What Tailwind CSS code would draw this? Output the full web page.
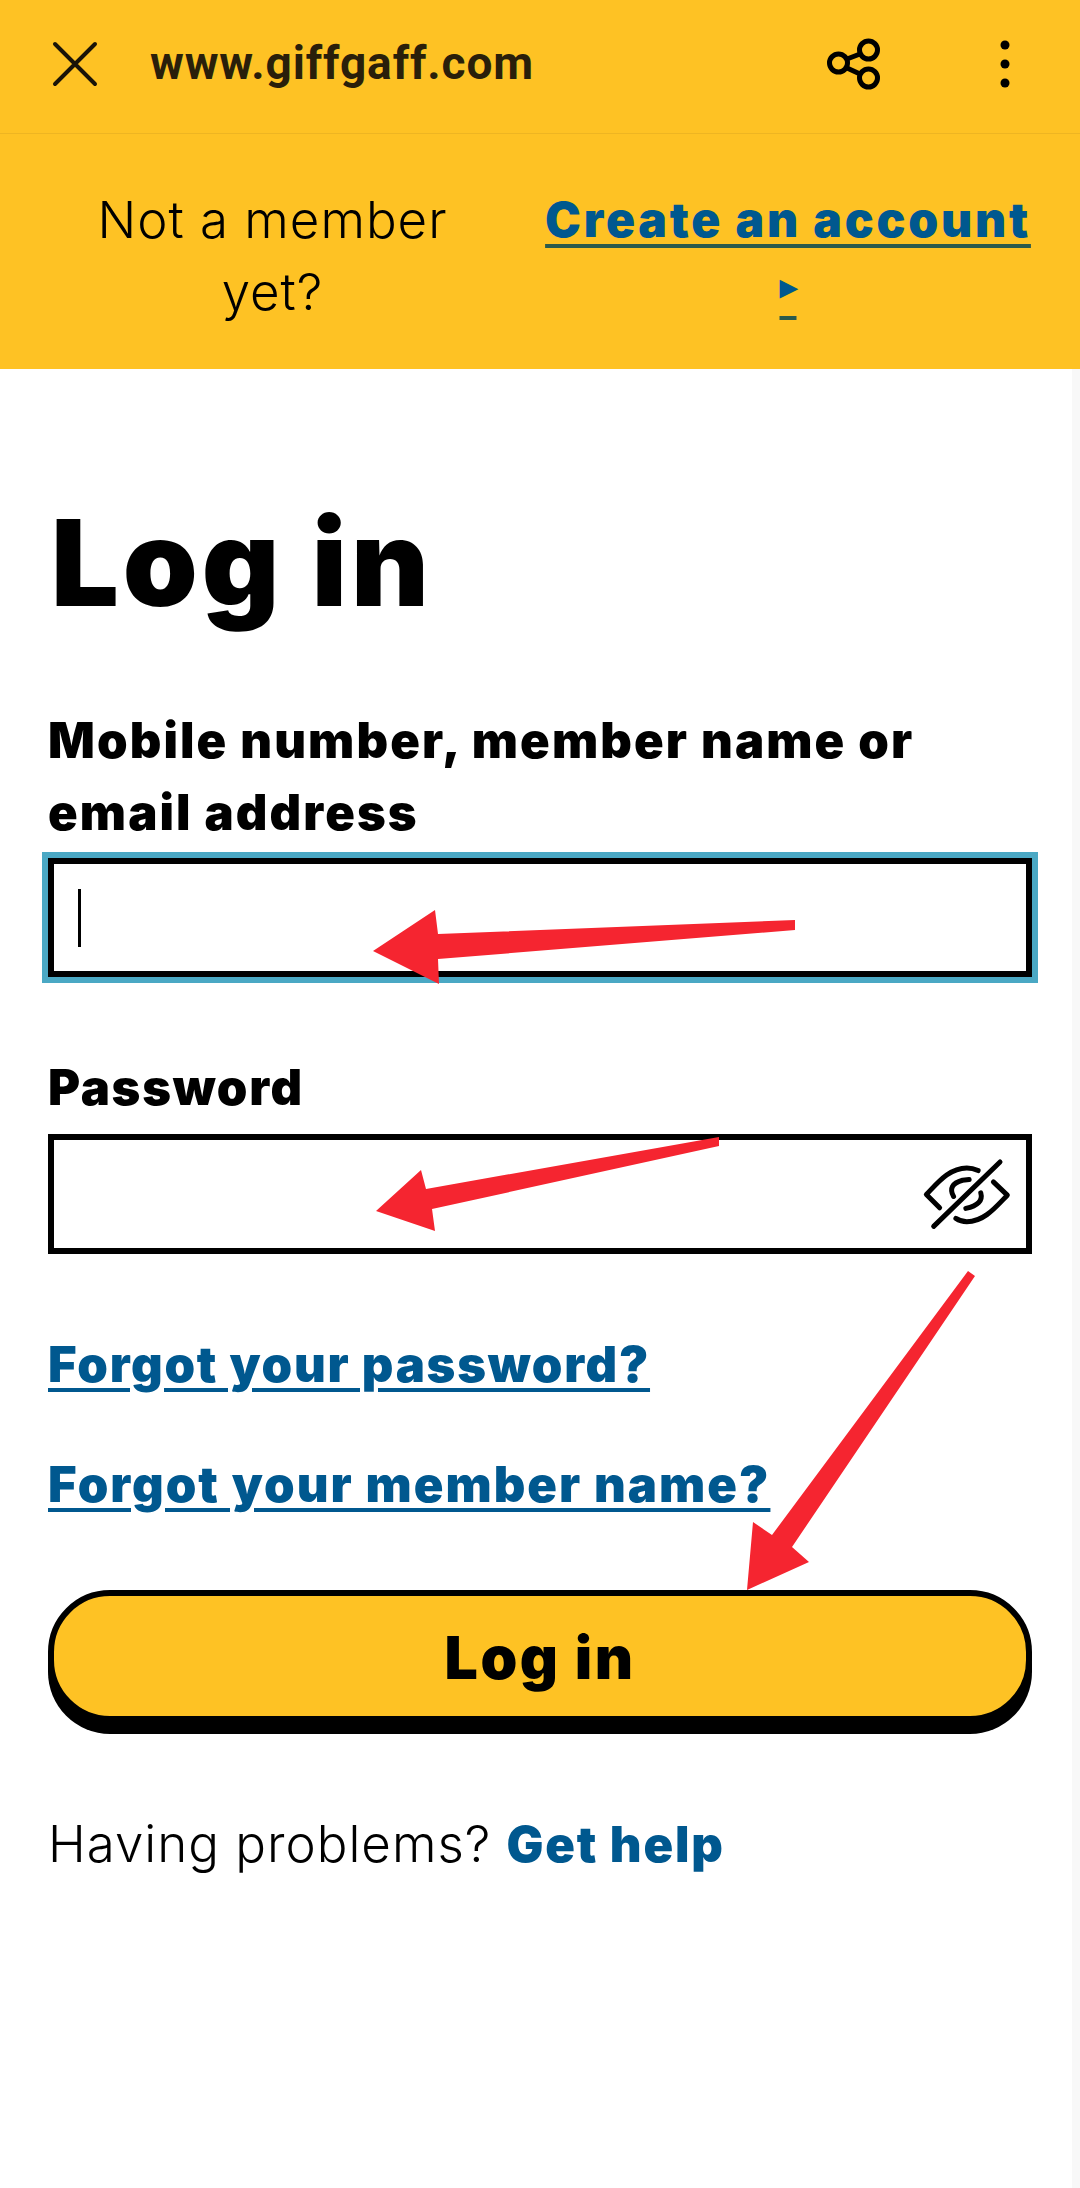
<!doctype html>
<html lang="en">
<head>
    <meta charset="utf-8">
    <title>Log in</title>
    <script src="https://cdn.jsdelivr.net/npm/@tailwindcss/browser@4"></script>
</head>
<body class="bg-white">
<div class="relative w-[1080px] h-[2188px] overflow-hidden font-['Inter',sans-serif] text-black">
    <!-- browser bar -->
    <div class="flex items-center h-[134px] pb-[6px] bg-[#fec224] border-b border-[#eeb522]">
        <svg class="ml-[52px] w-[46px] h-[46px]" viewBox="0 0 46 46" fill="none" stroke="#1a1408" stroke-width="4" stroke-linecap="round"><path d="M3 3 L43 43 M43 3 L3 43"/></svg>
        <span class="ml-[52px] font-['Roboto',sans-serif] font-bold text-[46px] tracking-[0.9px] text-[#2a1f0a]">www.giffgaff.com</span>
        <svg class="ml-auto w-[54px] h-[54px]" viewBox="0 0 54 54" fill="none" stroke="#000" stroke-width="5"><circle cx="11.5" cy="26" r="9"/><circle cx="41.5" cy="13" r="9"/><circle cx="41.5" cy="41" r="9"/><path d="M20 22 L33 17 M20 31 L33 37"/></svg>
        <svg class="ml-[118px] mr-[69px] w-[12px] h-[56px]" viewBox="0 0 12 56" fill="#000"><circle cx="6" cy="9" r="4.5"/><circle cx="6" cy="28" r="4.5"/><circle cx="6" cy="47" r="4.5"/></svg>
    </div>

    <!-- banner -->
    <div class="flex h-[235px] bg-[#fec224] pt-[50px]">
        <p class="w-[545px] text-center font-light text-[51px] tracking-[1px] leading-[72px]">Not a member<br>yet?</p>
        <a class="w-[486px] text-center font-black text-[48px] tracking-[2.8px] leading-[72px] text-[#00588f]">
            <span class="underline decoration-[#2b5a4c] decoration-[4px] underline-offset-[7px]">Create an account</span><br>
            <span class="inline-block -translate-y-[11px] text-[34px] tracking-normal underline decoration-[#2b5a4c] decoration-[4px] underline-offset-[18px]">▸</span>
        </a>
    </div>

    <!-- form -->
    <div class="px-[48px]">
        <h1 class="mt-[124px] pl-[3px] font-black text-[120px] tracking-[4px] leading-[140px]">Log in</h1>
        <label class="block mt-[72px] font-black text-[49px] tracking-[2.1px] leading-[72px]">Mobile number, member name or<br>email address</label>
        <div class="mt-[9px] h-[119px] border-[6px] border-black outline-[6px] outline-[#4aa8c4] flex items-center pl-[24px]">
            <div class="w-[3px] h-[58px] bg-black"></div>
        </div>
        <label class="block mt-[75px] font-black text-[49px] tracking-[1.7px] leading-[72px]">Password</label>
        <div class="mt-[10px] h-[120px] border-[6px] border-black flex items-center justify-end pr-[12px]">
            <svg class="w-[93px] h-[73px]" viewBox="120 110 280 220" fill="none" stroke="#000" stroke-width="15" stroke-linecap="round" stroke-linejoin="round">
                <path d="M176 260 L136 220 C170 185 205 140 258 140 Q275 140 292 148"/>
                <path d="M338 182 L380 222 C345 258 310 302 258 302 Q240 302 225 292"/>
                <path d="M218 226 Q198 190 245 177 L265 175"/>
                <path d="M300 215 Q310 250 255 262"/>
                <path d="M358 122 L158 316"/>
            </svg>
        </div>
        <a class="block mt-[75px] font-black text-[49px] tracking-[1.7px] leading-[72px] text-[#00588f] underline decoration-[4px] underline-offset-[6px]">Forgot your password?</a>
        <a class="block mt-[48px] font-black text-[49px] tracking-[2px] leading-[72px] text-[#00588f] underline decoration-[4px] underline-offset-[6px]">Forgot your member name?</a>
        <button class="block w-full mt-[69px] h-[132px] pt-[4px] rounded-[62px] border-[6px] border-black bg-[#fec224] font-black text-[59px] tracking-[2.5px] shadow-[0_12px_0_0_#000]">Log in</button>
        <p class="mt-[86px] font-light text-[51px] tracking-[1px] leading-[72px]">Having problems? <span class="font-black text-[49px] tracking-[1.8px] text-[#00588f]">Get help</span></p>
    </div>

    <!-- red annotation arrows -->
    <svg class="absolute left-0 top-0" width="1080" height="2188" fill="#f52530">
        <polygon points="373,951 435,910 438,934 795,920 795,930 438,959 439,984"/>
        <polygon points="719,1137 719,1146 432,1209 435,1231 376,1211 421,1170 426,1189"/>
        <polygon points="968,1271 975,1276 792,1547 809,1562 747,1590 753,1522 772,1535"/>
    </svg>
    <div class="absolute right-0 top-[369px] bottom-0 w-[8px] bg-[#f8f8f8]"></div>
</div>
</body>
</html>
